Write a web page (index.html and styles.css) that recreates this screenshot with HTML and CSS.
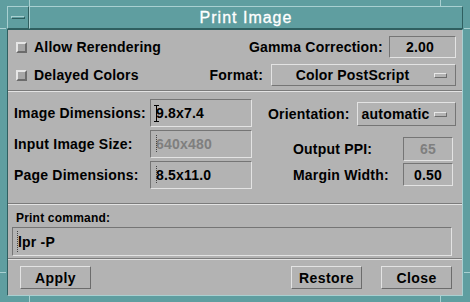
FILE: index.html
```html
<!DOCTYPE html>
<html>
<head>
<meta charset="utf-8">
<link rel="stylesheet" href="styles.css">
</head>
<body>
<div class="win">
  <span class="mark mv m-tl"></span>
  <span class="mark mv m-tr"></span>
  <span class="mark mv m-bl"></span>
  <span class="mark mv m-br"></span>
  <span class="mark mh m-lt"></span>
  <span class="mark mh m-lb"></span>
  <span class="mark mh m-rt"></span>
  <span class="mark mh m-rb"></span>
  <div class="titlebar">
    <div class="menubtn"><span class="dash"></span></div>
    <div class="title">Print Image</div>
  </div>
  <div class="panel">
    <div class="secA">
      <div class="rowA">
        <div class="check"><span class="box"></span>Allow Rerendering</div>
        <span class="lbl gap-r6">Gamma Correction:</span>
        <span class="field gamma">2.00</span>
      </div>
      <div class="rowA">
        <div class="check"><span class="box"></span>Delayed Colors</div>
        <span class="lbl gap-r8">Format:</span>
        <div class="option format"><span class="optlbl">Color PostScript</span><span class="ind"></span></div>
      </div>
    </div>
    <div class="sep"></div>
    <div class="secB">
      <div class="leftgrid">
        <span class="lbl">Image Dimensions:</span>
        <span class="field dim"><span class="caret solid"></span>9.8x7.4</span>
        <span class="lbl">Input Image Size:</span>
        <span class="field dim dis"><span class="caret dotted"></span>640x480</span>
        <span class="lbl">Page Dimensions:</span>
        <span class="field dim"><span class="caret dotted"></span>8.5x11.0</span>
      </div>
      <div class="rightcol">
        <div class="orow">
          <span class="lbl">Orientation:</span>
          <div class="option orient"><span class="optlbl">automatic</span><span class="ind"></span></div>
        </div>
        <div class="subgrid">
          <span class="lbl">Output PPI:</span>
          <span class="field num dis r1">65</span>
          <span class="lbl">Margin Width:</span>
          <span class="field num r2">0.50</span>
        </div>
      </div>
    </div>
    <div class="sep"></div>
    <div class="secC">
      <div class="small">Print command:</div>
      <div class="field cmd"><span class="caret dotted"></span>lpr -P</div>
    </div>
    <div class="sep"></div>
    <div class="secD">
      <button class="btn">Apply</button>
      <span class="spacer"></span>
      <button class="btn">Restore</button>
      <button class="btn close">Close</button>
    </div>
  </div>
</div>
</body>
</html>
```

FILE: styles.css
```css
* { box-sizing: border-box; }
body {
  margin: 0;
  background: #5f9ea0;
  font-family: "Liberation Sans", Arial, sans-serif;
  font-weight: bold;
  font-size: 14px;
  letter-spacing: 0.2px;
  color: #000;
}
.win {
  position: relative;
  width: 470px;
  height: 302px;
  padding: 6px 7px 6px 7px;
  display: flex;
  flex-direction: column;
  overflow: hidden;
}
.mark { position: absolute; background: #a9d0d1; }
.mv { width: 1px; height: 6px; }
.mh { width: 6px; height: 1px; }
.m-tl { left: 29px; top: 0; }
.m-tr { left: 440px; top: 0; }
.m-bl { left: 29px; bottom: 0; }
.m-br { left: 440px; bottom: 0; }
.m-lt { left: 0; top: 28px; }
.m-lb { left: 0; top: 272px; }
.m-rt { right: 0; top: 28px; }
.m-rb { right: 0; top: 272px; }

.titlebar { height: 23px; display: flex; }
.menubtn {
  width: 22px;
  border: 1px solid;
  border-color: #a9d0d1 #2f5f60 #2f5f60 #a9d0d1;
  display: flex;
  align-items: center;
  justify-content: center;
}
.dash {
  width: 14px;
  height: 3px;
  border-top: 1px solid #a9d0d1;
  border-bottom: 1px solid #2f5f60;
  border-left: 1px solid #a9d0d1;
  border-right: 1px solid #2f5f60;
}
.title {
  flex: 1;
  border: 1px solid;
  border-color: #a9d0d1 #2f5f60 #2f5f60 #a9d0d1;
  color: #fff;
  font-weight: normal;
  font-size: 16px;
  letter-spacing: 1px;
  line-height: 21px;
  text-align: center;
  -webkit-text-stroke: 0.3px #fff;
}
.panel {
  flex: 1;
  background: #b3b3b3;
  border: 1px solid;
  border-color: #2f5f60 #a9d0d1 #a9d0d1 #2f5f60;
  display: flex;
  flex-direction: column;
}
.sep {
  height: 2px;
  border-top: 1px solid #7b7b7b;
  border-bottom: 1px solid #e3e3e3;
}
.secA {
  height: 60px;
  padding: 6px 6px 0 8px;
  display: flex;
  flex-direction: column;
  gap: 6px;
}
.rowA {
  height: 22px;
  display: flex;
  align-items: center;
}
.check {
  flex: 1;
  display: flex;
  align-items: center;
  gap: 7px;
}
.box {
  width: 11px;
  height: 11px;
  background: #a6a6a6;
  border: 2px solid;
  border-color: #e6e6e6 #6c6c6c #6c6c6c #e6e6e6;
}
.lbl { white-space: nowrap; }
.gap-r6 { margin-right: 6px; }
.gap-r8 { margin-right: 8px; }
.field {
  position: relative;
  display: flex;
  align-items: center;
  border: 1px solid;
  border-color: #757575 #e3e3e3 #e3e3e3 #757575;
  white-space: nowrap;
}
.dis { color: #7f7f7f; }
.gamma { width: 67px; height: 22px; justify-content: center; padding-right: 5px; }
.option {
  display: flex;
  align-items: center;
  border: 1px solid;
  border-color: #e3e3e3 #757575 #757575 #e3e3e3;
  padding: 0 8px 0 2px;
}
.optlbl { flex: 1; text-align: center; }
.ind {
  width: 13px;
  height: 5px;
  margin-left: 3px;
  border: 1px solid;
  border-color: #e8e8e8 #6c6c6c #6c6c6c #e8e8e8;
}
.format { width: 185px; height: 22px; }
.orient { width: 99px; height: 24px; }

.secB {
  height: 111px;
  padding: 7px 6px 0 6px;
  display: flex;
  gap: 16px;
}
.leftgrid {
  display: grid;
  grid-template-columns: 136px 102px;
  grid-auto-rows: 28px;
  row-gap: 3px;
  align-items: center;
  align-content: start;
}
.dim { height: 28px; padding-left: 5px; }
.caret {
  position: absolute;
  left: 3px;
  width: 5px;
}
.caret.solid {
  top: 5px;
  height: 17px;
  border-top: 1px solid #000;
  border-bottom: 1px solid #000;
  background: linear-gradient(#000, #000) center / 1px 100% no-repeat;
}
.caret.dotted {
  top: 4px;
  height: 18px;
  background:
    repeating-linear-gradient(#444 0 1px, transparent 1px 2px) center / 1px 100% no-repeat;
}
.rightcol {
  width: 188px;
  padding-top: 3px;
  display: flex;
  flex-direction: column;
}
.orow {
  height: 24px;
  display: flex;
  align-items: center;
  justify-content: space-between;
}
.subgrid {
  margin-top: 11px;
  padding-left: 25px;
  display: grid;
  grid-template-columns: 110px 50px;
  grid-template-rows: 24px 23px;
  row-gap: 2px;
  align-items: center;
}
.num { height: 100%; justify-content: center; }

.secC {
  height: 53px;
  padding: 6px 10px 0 4px;
  display: flex;
  flex-direction: column;
}
.small {
  font-size: 12px;
  line-height: 14px;
  margin-left: 4px;
  height: 16px;
}
.cmd {
  height: 29px;
  width: 440px;
  padding-left: 5px;
}
.cmd .caret.dotted { top: 3px; height: 22px; left: 2px; }

.secD {
  height: 35px;
  padding: 6px 10px 0 12px;
  display: flex;
  align-items: flex-start;
}
.spacer { flex: 1; }
.btn {
  width: 71px;
  height: 23px;
  font: inherit;
  background: #b3b3b3;
  color: #000;
  border: 1px solid;
  border-color: #e3e3e3 #6c6c6c #6c6c6c #e3e3e3;
  padding: 0;
  letter-spacing: 0.4px;
}
.close { margin-left: 19px; }
```
